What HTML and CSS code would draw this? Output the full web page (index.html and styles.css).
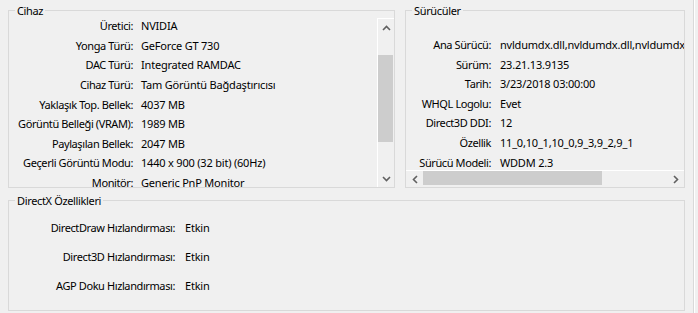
FILE: index.html
```html
<!DOCTYPE html>
<html lang="tr">
<head>
    <meta charset="UTF-8">
    <title>Ekran</title>
    <link rel="stylesheet" href="styles.css">
</head>
<body>
    <div class="window">
        <div class="top-row">
            <!-- Cihaz -->
            <fieldset class="group device">
                <legend>Cihaz</legend>
                <div class="list-wrap">
                    <div class="list">
                        <div class="info device-info">
                            <span class="label">Üretici:</span><span class="value">NVIDIA</span>
                            <span class="label">Yonga Türü:</span><span class="value">GeForce GT 730</span>
                            <span class="label">DAC Türü:</span><span class="value">Integrated RAMDAC</span>
                            <span class="label">Cihaz Türü:</span><span class="value">Tam Görüntü Bağdaştırıcısı</span>
                            <span class="label">Yaklaşık Top. Bellek:</span><span class="value">4037 MB</span>
                            <span class="label">Görüntü Belleği (VRAM):</span><span class="value">1989 MB</span>
                            <span class="label">Paylaşılan Bellek:</span><span class="value">2047 MB</span>
                            <span class="label">Geçerli Görüntü Modu:</span><span class="value">1440 x 900 (32 bit) (60Hz)</span>
                            <span class="label">Monitör:</span><span class="value">Generic PnP Monitor</span>
                        </div>
                    </div>
                    <div class="vscroll">
                        <div class="arrow-btn">
                            <svg width="9" height="6" viewBox="0 0 9 6"><polyline points="1,5 4.5,1.5 8,5" fill="none" stroke="#606060" stroke-width="1.6"/></svg>
                        </div>
                        <div class="vtrack"><div class="vthumb"></div></div>
                        <div class="arrow-btn">
                            <svg width="9" height="6" viewBox="0 0 9 6"><polyline points="1,1 4.5,4.5 8,1" fill="none" stroke="#606060" stroke-width="1.6"/></svg>
                        </div>
                    </div>
                </div>
            </fieldset>

            <!-- Sürücüler -->
            <fieldset class="group drivers">
                <legend>Sürücüler</legend>
                <div class="driver-list">
                    <div class="info driver-info">
                        <span class="label">Ana Sürücü:</span><span class="value">nvldumdx.dll,nvldumdx.dll,nvldumdx.dll,nvldumdx.dll</span>
                        <span class="label">Sürüm:</span><span class="value">23.21.13.9135</span>
                        <span class="label">Tarih:</span><span class="value">3/23/2018 03:00:00</span>
                        <span class="label">WHQL Logolu:</span><span class="value">Evet</span>
                        <span class="label">Direct3D DDI:</span><span class="value">12</span>
                        <span class="label">Özellik</span><span class="value">11_0,10_1,10_0,9_3,9_2,9_1</span>
                        <span class="label">Sürücü Modeli:</span><span class="value">WDDM 2.3</span>
                    </div>
                </div>
                <div class="hscroll">
                    <div class="arrow-btn">
                        <svg width="6" height="9" viewBox="0 0 6 9"><polyline points="5,1 1.5,4.5 5,8" fill="none" stroke="#606060" stroke-width="1.6"/></svg>
                    </div>
                    <div class="htrack"><div class="hthumb"></div></div>
                    <div class="arrow-btn">
                        <svg width="6" height="9" viewBox="0 0 6 9"><polyline points="1,1 4.5,4.5 1,8" fill="none" stroke="#606060" stroke-width="1.6"/></svg>
                    </div>
                </div>
            </fieldset>
        </div>

        <!-- DirectX -->
        <fieldset class="group directx">
            <legend>DirectX Özellikleri</legend>
            <div class="info dx-info">
                <span class="label">DirectDraw Hızlandırması:</span><span class="value">Etkin</span>
                <span class="label">Direct3D Hızlandırması:</span><span class="value">Etkin</span>
                <span class="label">AGP Doku Hızlandırması:</span><span class="value">Etkin</span>
            </div>
        </fieldset>
    </div>
</body>
</html>
```

FILE: styles.css
```css
/* === Base === */
* {
    box-sizing: border-box;
}

body {
    margin: 0;
    background: #f0f0f0;
    color: #000;
    font-family: 'Noto Sans', sans-serif;
    font-size: 11px;
    letter-spacing: -0.2px;
}

.window {
    width: 694px;
    height: 313px;
    padding: 3px 0 0 8px;
    border-right: 1px solid #d9d9d9;
    box-shadow: 1px 0 0 #fff;
}

.top-row {
    display: flex;
    gap: 10px;
    height: 185px;
}

/* Group boxes */
.group {
    margin: 0;
    padding: 0;
    min-width: 0;
    border: 1px solid #d9d9d9;
}

.group legend {
    margin-left: 6px;
    padding: 0 2px;
    line-height: 15px;
    letter-spacing: -0.35px;
}

.device {
    width: 387px;
    height: 185px;
}

.drivers {
    width: 280px;
    height: 185px;
}

.directx {
    width: 677px;
    height: 118px;
    margin-top: 5px;
}

/* Label / value rows */
.info {
    display: grid;
    align-items: center;
    white-space: nowrap;
}

.info .label {
    text-align: right;
    letter-spacing: -0.4px;
}

.device-info {
    grid-template-columns: 124px auto;
    grid-auto-rows: 19.6px;
    column-gap: 8px;
    margin-top: -2px;
}

.driver-info {
    grid-template-columns: 85px auto;
    grid-auto-rows: 19.55px;
    column-gap: 9px;
    padding-top: 17px;
}

.dx-info {
    grid-template-columns: 166px auto;
    grid-auto-rows: 29px;
    column-gap: 10px;
    padding-top: 4.5px;
}

/* Cihaz list + vertical scrollbar */
.list-wrap {
    display: flex;
    height: 169px;
}

.list {
    flex: 1;
    overflow: hidden;
}

.vscroll {
    width: 17px;
    display: flex;
    flex-direction: column;
    border-left: 1px solid #fff;
    border-top: 1px solid #fff;
}

.arrow-btn {
    display: grid;
    place-items: center;
    flex: 0 0 17px;
    height: 17px;
}

.vtrack {
    flex: 1;
}

.vthumb {
    width: 15px;
    height: 87px;
    margin-top: 19px;
    background: #cdcdcd;
}

/* Sürücüler list + horizontal scrollbar */
.driver-list {
    height: 152px;
    overflow: hidden;
}

.hscroll {
    display: flex;
    height: 17px;
    border-top: 1px solid #fff;
}

.hscroll .arrow-btn {
    width: 17px;
    height: 16px;
}

.htrack {
    flex: 1;
}

.hthumb {
    width: 179px;
    height: 14px;
    background: #cdcdcd;
}
```
